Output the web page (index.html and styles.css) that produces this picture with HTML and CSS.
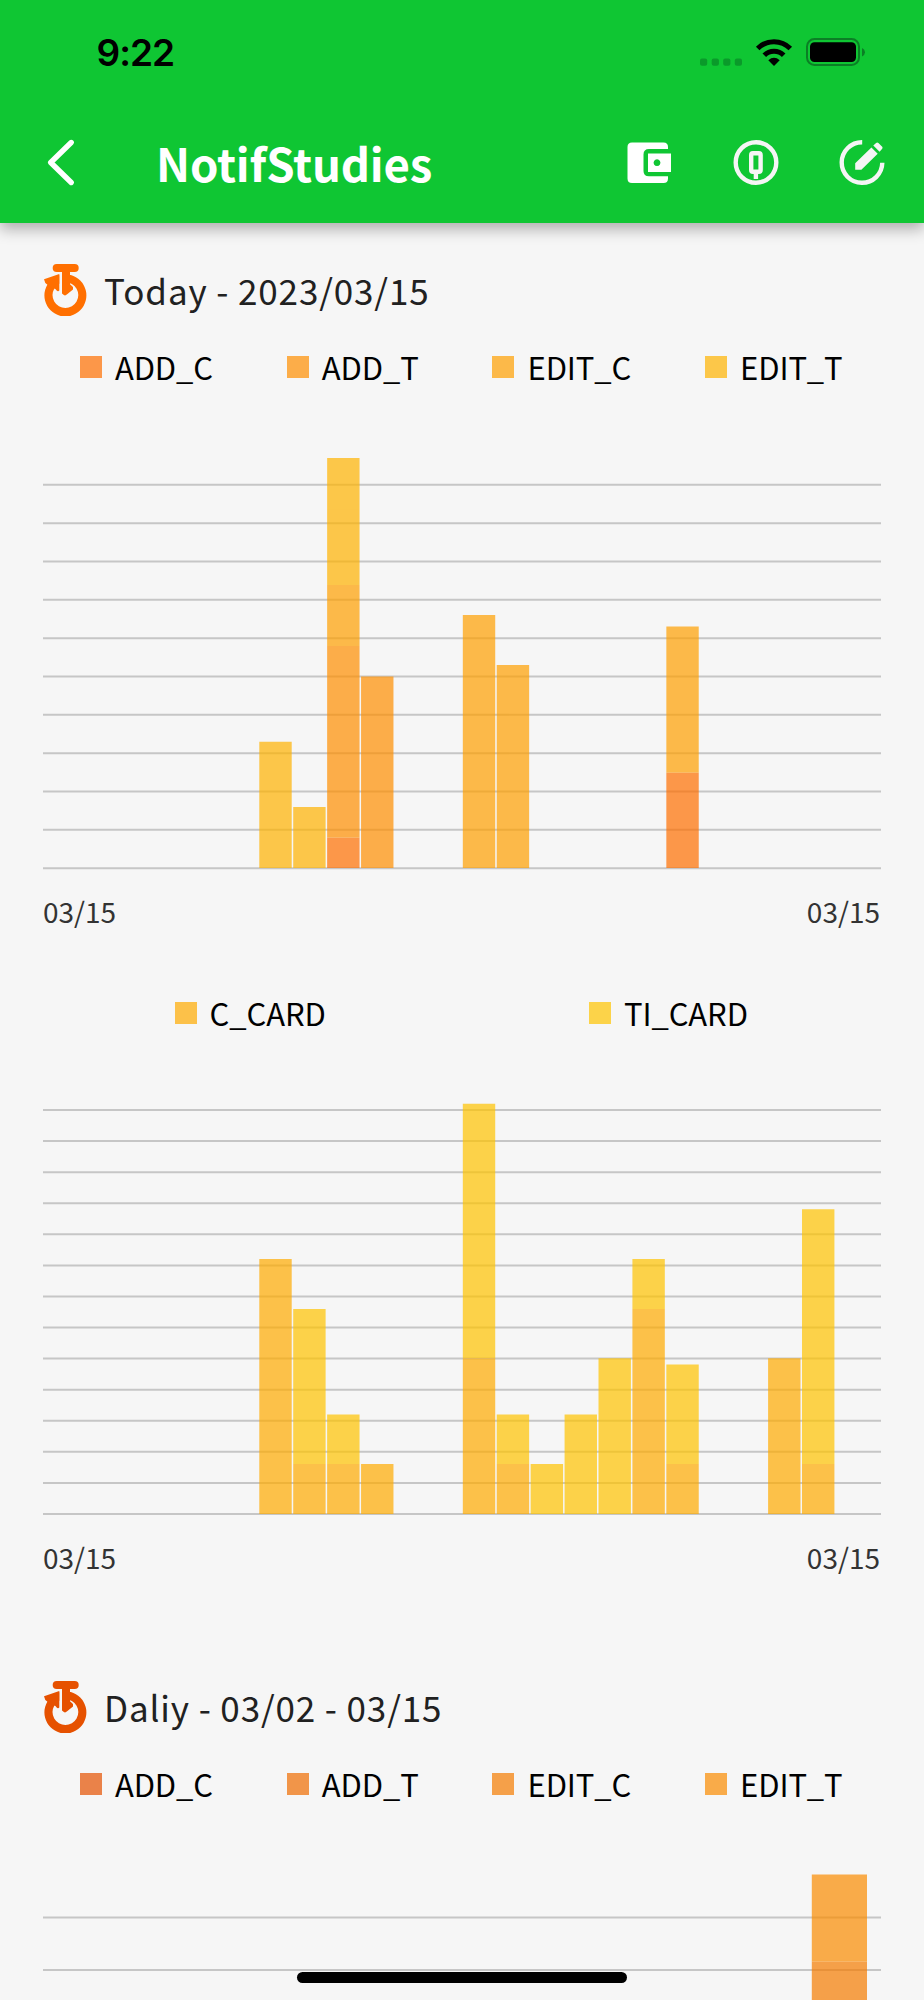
FILE: index.html
```html
<!DOCTYPE html>
<html lang="en">
<head>
<meta charset="utf-8">
<title>NotifStudies</title>
<link rel="stylesheet" href="styles.css">
</head>
<body>
<svg class="defs" width="0" height="0" aria-hidden="true">
  <symbol id="stopwatch" viewBox="0 0 44 54">
    <path fill-rule="evenodd" d="M22.4 12.4a21 21 0 1 1-.01 0zM22.4 20.2a12.900 12.900 0 1 0 .01 0z"/>
    <rect x="9.7" y="1.900" width="26" height="8" rx="4"/>
    <path class="cut" d="M16.300 10H19V30H16.300z"/>
    <path d="M1 17.300L16.300 11.900V28.500Q15 30 13.400 28.300Q12 25.500 10 27L2.300 21z"/>
    <path d="M19 8H27V22.300L30 25V27.500L23.800 32.600Q22.300 34.100 20.500 32.800L19 31.500z"/>
  </symbol>
</svg>
<header class="header">
  <div class="status">
    <span class="time">9:22</span>
    <svg class="status-icons" width="168" height="36" viewBox="698 34 168 36">
      <g fill="#0a9a2a"><rect x="700" y="58.500" width="7.200" height="7.200" rx="2"/><rect x="711.700" y="58.500" width="7.200" height="7.200" rx="2"/><rect x="723.200" y="58.500" width="7.200" height="7.200" rx="2"/><rect x="734.800" y="58.500" width="7.200" height="7.200" rx="2"/></g>
      <g fill="none" stroke="#000" stroke-width="5"><path d="M757.700 48.400A23 23 0 0 1 790.300 48.400"/><path d="M764.300 55.200A13.700 13.700 0 0 1 783.700 55.200"/></g>
      <path d="M774 66L768.300 60.200Q774 55.400 779.700 60.200z"/>
      <rect x="807" y="39" width="52" height="26" rx="7.500" fill="none" stroke="#0b7f25" stroke-width="2"/>
      <rect x="810" y="42.300" width="46" height="19.700" rx="4.500"/>
      <path d="M862 48Q865 49.500 865 52.300Q865 55 862 56.500z" fill="#0b7f25"/>
    </svg>
  </div>
  <div class="toolbar">
    <svg class="back" width="30" height="50" viewBox="46 138 30 50"><path d="M71.200 142.500L50.700 162.500L71.200 182.500" fill="none" stroke="#fff" stroke-width="5.400" stroke-linecap="round" stroke-linejoin="round"/></svg>
    <h1 class="title">NotifStudies</h1>
    <div class="actions">
      <svg width="48" height="50" viewBox="625 138 48 50"><path fill="#fff" d="M632 142.500H663.500Q668 142.500 668 147V149H649Q643.500 149 643.500 154.500V171Q643.500 176.300 649 176.300H668V178.500Q668 183 663.500 183H632Q627.500 183 627.500 178.500V147Q627.500 142.500 632 142.500z"/><path fill="#fff" fill-rule="evenodd" d="M648 153.500H671V172H648zM657 159.300a3.400 3.400 0 1 0 .01 0z"/></svg>
      <svg width="48" height="50" viewBox="731.300 138 48 50" fill="none" stroke="#f5f5f5" stroke-width="4.400"><circle cx="755.300" cy="162.500" r="20.300"/><rect x="750.500" y="153.300" width="9.400" height="18.400" rx="1.700"/><path d="M755.200 172V179"/></svg>
      <svg width="48" height="50" viewBox="838.300 138 48 50"><path d="M862.500 142.200A20.300 20.300 0 1 0 882.600 162.800" fill="none" stroke="#f5f5f5" stroke-width="4.400"/><path fill="#f5f5f5" d="M855.500 169.800V163.300L871.700 147.400L878 153.700L861.700 169.800zM873.600 145.500L876.400 142.900Q877.600 142 878.700 143L882.500 146.800Q883.300 147.800 882.500 148.800L879.900 151.800z"/></svg>
    </div>
  </div>
</header>
<main class="content">
  <h2 class="heading"><svg class="today" width="44" height="54"><use href="#stopwatch"/></svg><span class="label">Today - 2023/03/15</span></h2>
  <div class="legend"><span class="item add-c">ADD_C</span><span class="item add-t">ADD_T</span><span class="item edit-c">EDIT_C</span><span class="item edit-t">EDIT_T</span></div>
  <svg class="chart" width="838" height="430" viewBox="43 450 838 430">
    <path class="grid" d="M43 484.800h838M43 523.130h838M43 561.470h838M43 599.800h838M43 638.140h838M43 676.500h838M43 714.840h838M43 753.170h838M43 791.510h838M43 829.850h838M43 868.200h838"/>
    <g class="bars">
      <path fill="#ffb300" d="M259.300 741.800h32.400V868h-32.400zM293.220 807h32.400V868h-32.400zM327.140 458h32.400V585h-32.400z"/>
      <path fill="#ffa000" d="M327.140 585h32.400V646h-32.400zM462.820 615h32.400V868h-32.400zM496.740 665h32.400V868h-32.400zM666.340 626.500h32.400V772.700h-32.400z"/>
      <path fill="#ff8f00" d="M327.140 646h32.400V837.800h-32.400zM361.060 676.500h32.400V868h-32.400z"/>
      <path fill="#ff6f00" d="M327.140 837.800h32.400V868h-32.400zM666.340 772.700h32.400V868h-32.400z"/>
    </g>
  </svg>
  <div class="axis"><span>03/15</span><span>03/15</span></div>
  <div class="legend second"><span class="item c-card">C_CARD</span><span class="item ti-card">TI_CARD</span></div>
  <svg class="chart" width="838" height="430" viewBox="43 1096 838 430">
    <path class="grid" d="M43 1110h838M43 1141.080h838M43 1172.150h838M43 1203.230h838M43 1234.310h838M43 1265.380h838M43 1296.460h838M43 1327.540h838M43 1358.610h838M43 1389.690h838M43 1420.770h838M43 1451.850h838M43 1482.920h838M43 1514h838"/>
    <g class="bars">
      <path fill="#ffc400" d="M293.220 1309h32.400V1464h-32.400zM327.140 1414.500h32.400V1464h-32.400zM462.820 1103.800h32.400V1358.300h-32.400zM496.740 1414.500h32.400V1464h-32.400zM530.660 1464h32.400V1514h-32.400zM564.580 1414.500h32.400V1514h-32.400zM598.500 1358.300h32.400V1514h-32.400zM632.420 1259h32.400V1309h-32.400zM666.340 1364.600h32.400V1464h-32.400zM802.020 1209.200h32.400V1464h-32.400z"/>
      <path fill="#ffab00" d="M259.300 1259h32.400V1514h-32.400zM293.220 1464h32.400V1514h-32.400zM327.140 1464h32.400V1514h-32.400zM361.060 1464h32.400V1514h-32.400zM462.820 1358.300h32.400V1514h-32.400zM496.740 1464h32.400V1514h-32.400zM632.420 1309h32.400V1514h-32.400zM666.340 1464h32.400V1514h-32.400zM768.100 1358.300h32.400V1514h-32.400zM802.020 1464h32.400V1514h-32.400z"/>
    </g>
  </svg>
  <div class="axis"><span>03/15</span><span>03/15</span></div>
  <h2 class="heading daily"><svg class="week" width="44" height="54"><use href="#stopwatch"/></svg><span class="label">Daliy - 03/02 - 03/15</span></h2>
  <div class="legend"><span class="item d-add-c">ADD_C</span><span class="item d-add-t">ADD_T</span><span class="item d-edit-c">EDIT_C</span><span class="item d-edit-t">EDIT_T</span></div>
  <svg class="chart" width="838" height="133" viewBox="43 1867 838 133">
    <path class="grid" d="M43 1917.600h838M43 1970h838"/>
    <g class="bars"><path fill="#fb8c00" d="M811.800 1874.500h55.200V1961.700h-55.200z"/><path fill="#f57c00" d="M811.800 1961.700h55.200V2000h-55.200z"/></g>
  </svg>
</main>
<div class="home-indicator"></div>
</body>
</html>
```

FILE: styles.css
```css
* { box-sizing: border-box; }
body {
  margin: 0;
  width: 924px;
  height: 2000px;
  position: relative;
  overflow: hidden;
  background: #f6f6f6;
  color: #000;
  font-family: "Noto Sans CJK JP", "Noto Sans", sans-serif;
}
svg { display: block; flex: none; }
.defs { position: absolute; }
.header {
  height: 222.5px;
  background: #0fc633;
  box-shadow: 0 6px 14px rgba(0, 0, 0, .3);
}
.status {
  height: 104px;
  padding: 34px 58px 0 96.500px;
  display: flex;
  justify-content: space-between;
}
.time {
  font: 600 37px/37px Inter, sans-serif;
  letter-spacing: -1px;
}
.toolbar {
  height: 118px;
  padding: 0 37.700px 0 46px;
  display: flex;
  align-items: center;
}
.title {
  margin: 0 0 3px 80px;
  color: #fff;
  font-size: 45.500px;
  font-weight: 700;
  line-height: 60px;
  letter-spacing: -.2px;
}
.actions { margin-left: auto; display: flex; gap: 58.700px; }
.content { padding: 39px 43px 0; }
.heading {
  height: 54px;
  margin: 0;
  display: flex;
  align-items: center;
  gap: 17px;
  color: #212121;
  font-size: 35px;
  font-weight: 400;
  line-height: 54px;
  letter-spacing: .87px;
  white-space: pre;
}
.label { padding-top: 2px; }
.today { fill: #ff6f00; }
.week { fill: #e65100; }
.cut { fill: #f6f6f6; }
.legend {
  height: 40px;
  margin-top: 31.500px;
  padding-right: 1.500px;
  display: flex;
  justify-content: space-around;
  align-items: center;
  font-size: 31px;
  line-height: 40px;
  letter-spacing: -.1px;
}
.item { display: flex; align-items: center; gap: 13px; }
.item::before { content: ""; width: 22px; height: 22px; background: var(--c); opacity: .7; }
.add-c { --c: #ff6f00; }
.add-t { --c: #ff8f00; }
.edit-c { --c: #ffa000; }
.edit-t { --c: #ffb300; }
.c-card { --c: #ffab00; }
.ti-card { --c: #ffc400; }
.d-add-c { --c: #e65100; }
.d-add-t { --c: #ef6c00; }
.d-edit-c { --c: #f57c00; }
.d-edit-t { --c: #fb8c00; }
.chart { margin-top: 62.500px; }
.grid { fill: none; stroke: #c6c6c6; stroke-width: 2; }
.bars { opacity: .7; }
.axis {
  height: 40px;
  margin-top: 11.500px;
  padding-right: 1px;
  display: flex;
  justify-content: space-between;
  color: #333;
  font-size: 28px;
  line-height: 40px;
}
.second { margin-top: 62px; }
.daily { margin-top: 101.500px; }
.home-indicator {
  position: absolute;
  left: 297px;
  top: 1972px;
  width: 330px;
  height: 10.500px;
  border-radius: 6px;
  background: #000;
}
```
